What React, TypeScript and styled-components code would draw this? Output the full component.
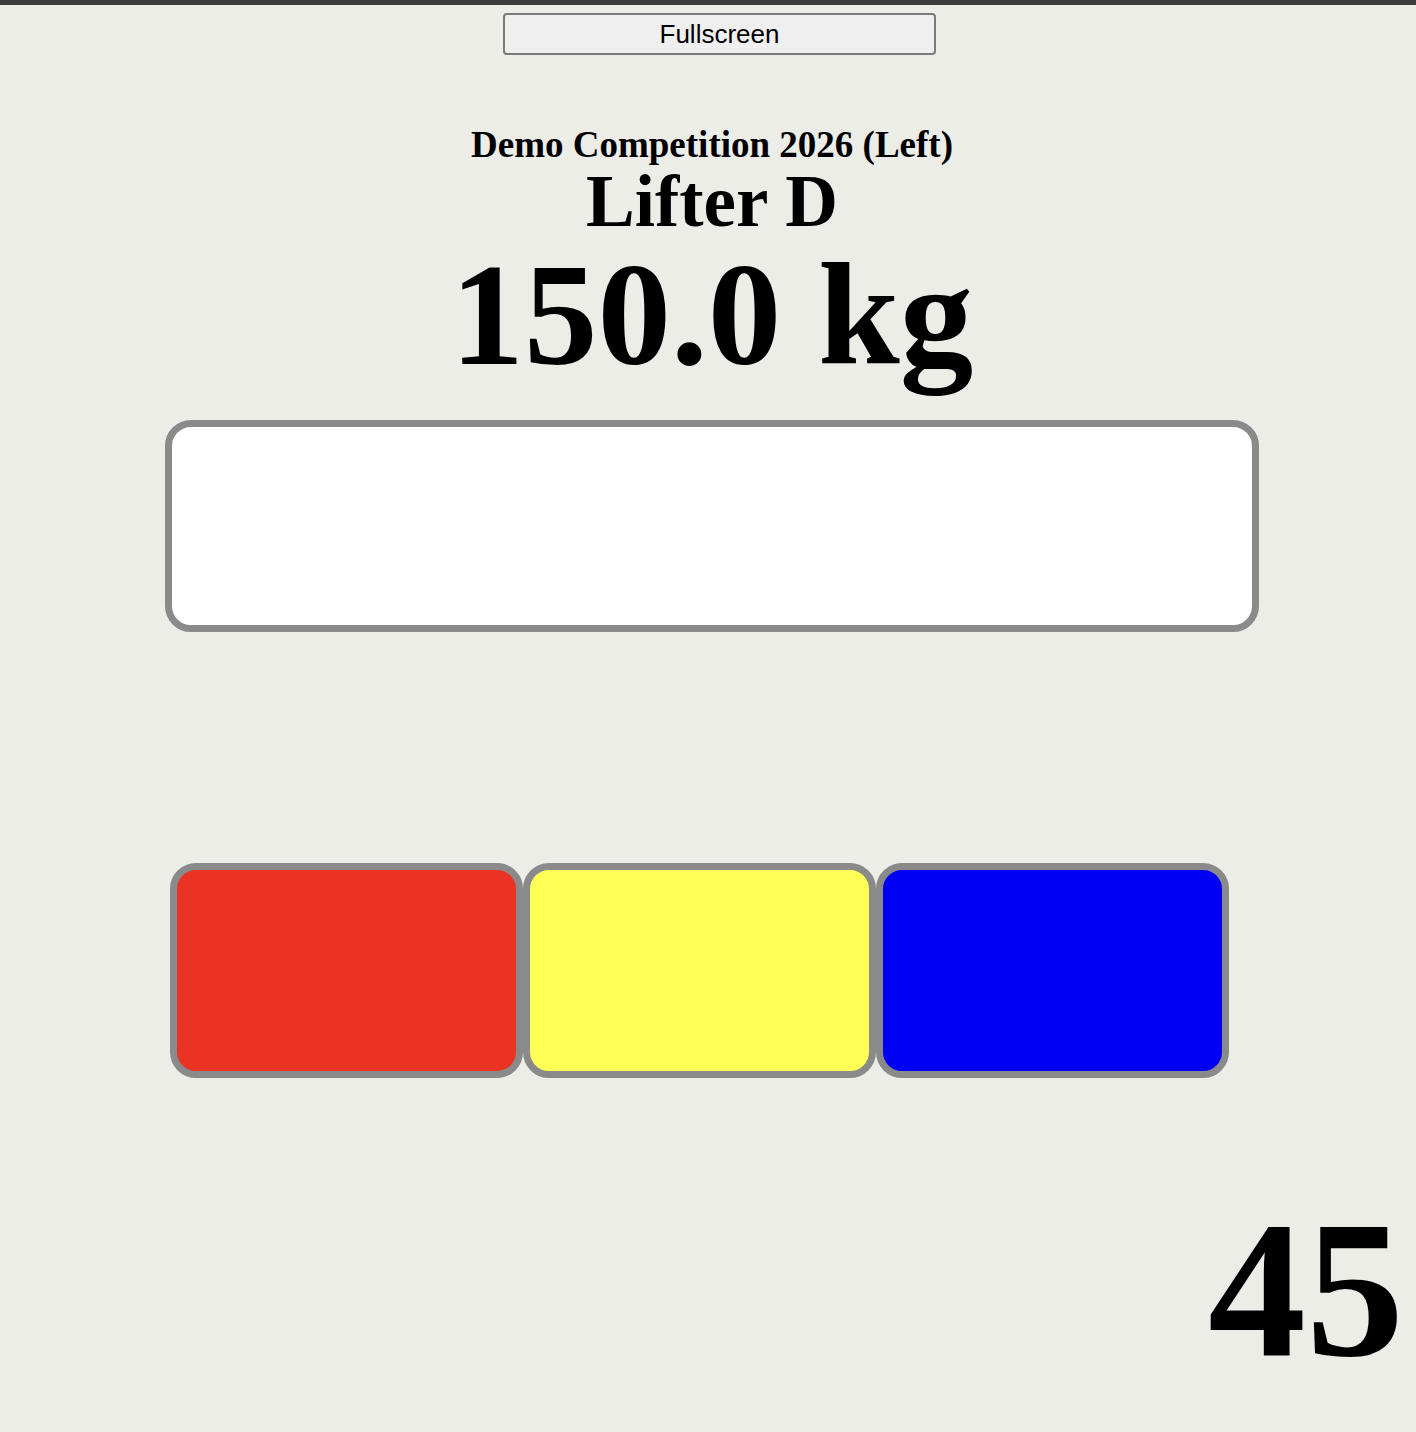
import styled, { createGlobalStyle } from "styled-components";

const GlobalStyle = createGlobalStyle`
  html, body {
    margin: 0;
    padding: 0;
    background: #edede8;
  }
  body {
    font-family: "Liberation Serif", "Times New Roman", serif;
    color: #000;
  }
`;

const Page = styled.div`
  min-height: 1432px;
  box-sizing: border-box;
  border-top: 5px solid #3c3c3c;
  padding-left: 8px;
  display: flex;
  flex-direction: column;
  align-items: center;
`;

const FullscreenButton = styled.button`
  align-self: flex-start;
  margin: 8px 0 0 495px;
  width: 433px;
  height: 42px;
  box-sizing: border-box;
  background: #efefef;
  border: 2px solid #7a7a7a;
  border-radius: 4px;
  font-family: "Liberation Sans", Arial, sans-serif;
  font-size: 26px;
  color: #000;
  padding: 0;
  cursor: pointer;
`;

const CompetitionTitle = styled.div`
  margin-top: 71px;
  font-size: 37px;
  line-height: 38px;
  font-weight: bold;
`;

const LifterName = styled.div`
  font-size: 73px;
  line-height: 76px;
  font-weight: bold;
`;

const Weight = styled.div`
  font-size: 147px;
  line-height: 149px;
  font-weight: bold;
`;

const MessageBox = styled.div`
  margin-top: 31px;
  width: 1094px;
  height: 212px;
  box-sizing: border-box;
  background: #fff;
  border: 7px solid #8a8a8a;
  border-radius: 26px;
`;

const LightsRow = styled.div`
  align-self: flex-start;
  margin: 231px 0 0 162px;
  display: flex;
`;

const Light = styled.div<{ $color: string }>`
  width: 353px;
  height: 215px;
  box-sizing: border-box;
  background: ${(p) => p.$color};
  border: 7px solid #8a8a8a;
  border-radius: 26px;
`;

const Clock = styled.div`
  align-self: flex-end;
  margin: 111px 12px 0 0;
  font-size: 196px;
  line-height: 200px;
  font-weight: bold;
`;

const lights = ["#ea3323", "#ffff55", "#0000f5"];

export default function App() {
  return (
    <>
      <GlobalStyle />
      <Page>
        <FullscreenButton>Fullscreen</FullscreenButton>
        <CompetitionTitle>Demo Competition 2026 (Left)</CompetitionTitle>
        <LifterName>Lifter D</LifterName>
        <Weight>150.0 kg</Weight>
        <MessageBox />
        <LightsRow>
          {lights.map((c) => (
            <Light key={c} $color={c} />
          ))}
        </LightsRow>
        <Clock>45</Clock>
      </Page>
    </>
  );
}
